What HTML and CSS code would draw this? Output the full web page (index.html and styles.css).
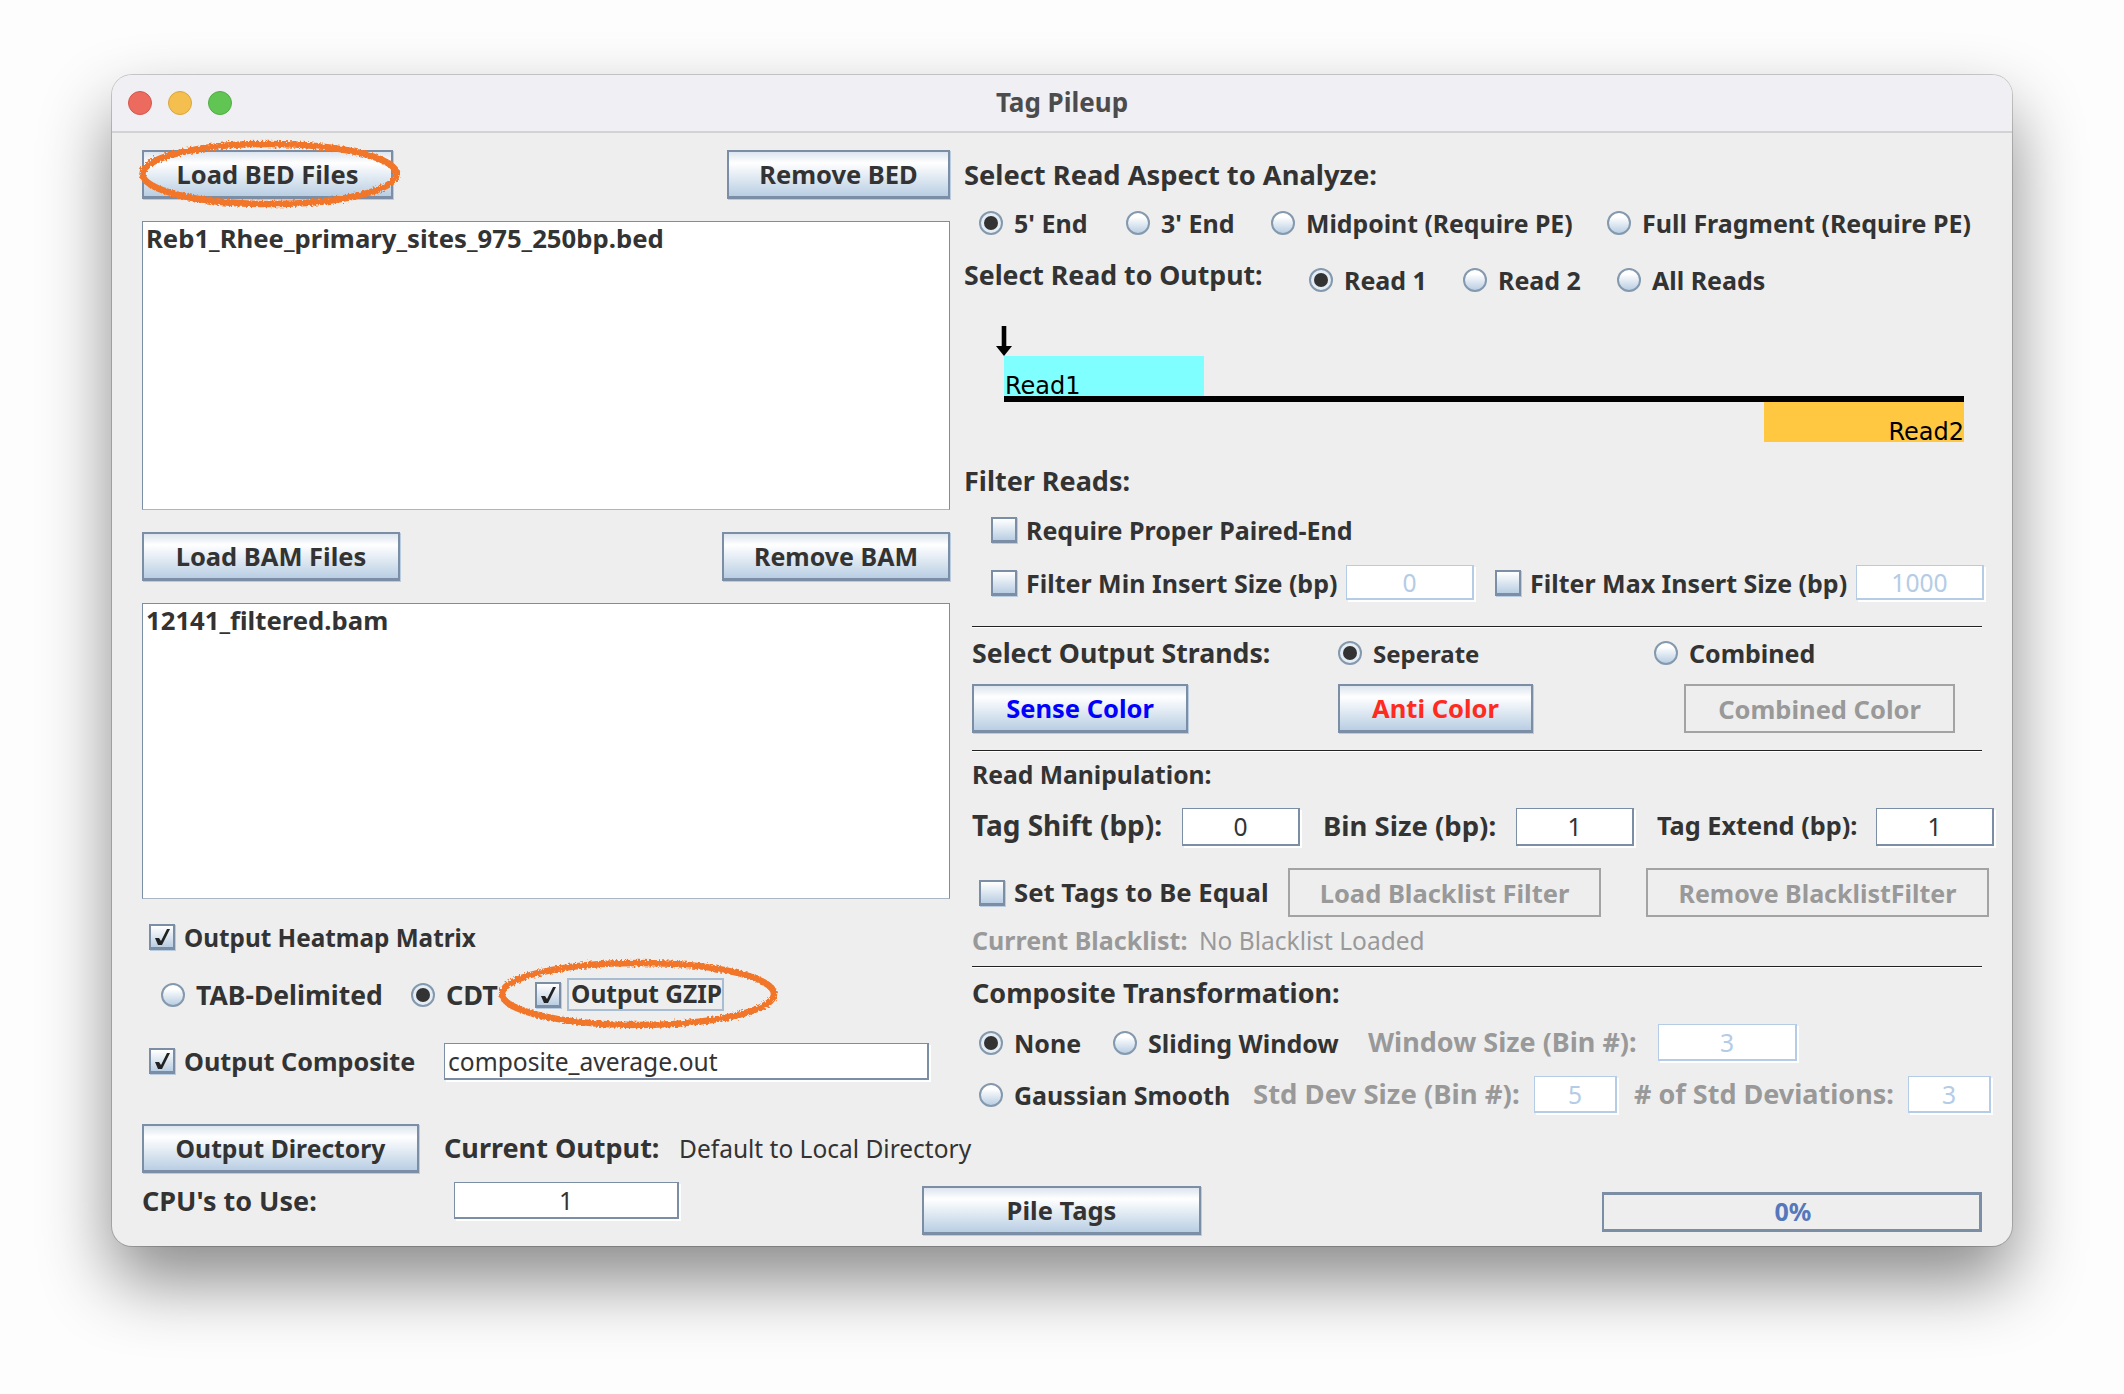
FILE: index.html
```html
<!DOCTYPE html>
<html lang="en">
  <head>
    <meta charset="UTF-8" />
    <title>Tag Pileup</title>
    <link rel="stylesheet" href="styles.css">
  </head>

  <body>
    <svg class="defs" width="0" height="0">
      <filter id="rough" x="-5%" y="-15%" width="110%" height="130%">
        <feTurbulence type="fractalNoise" baseFrequency="0.45" numOctaves="2" seed="4" />
        <feDisplacementMap in="SourceGraphic" scale="5" />
      </filter>
    </svg>

    <div class="window">
      <div class="titlebar">
        <span class="light red"></span>
        <span class="light yellow"></span>
        <span class="light green"></span>
        <span class="title">Tag Pileup</span>
      </div>

      <div class="main">
        <!-- left side: input files and output options -->
        <div class="left">
          <div class="row between">
            <button class="btn w-loadbed">Load BED Files</button>
            <button class="btn w-removebed">Remove BED</button>
          </div>
          <div class="list first">Reb1_Rhee_primary_sites_975_250bp.bed</div>
          <div class="row between bam-row">
            <button class="btn w-loadbam">Load BAM Files</button>
            <button class="btn w-removebam">Remove BAM</button>
          </div>
          <div class="list second">12141_filtered.bam</div>

          <div class="row heatmap-row">
            <label class="opt"><span class="check on"><svg viewBox="0 0 22 22"><path d="M4 12h4l2 3 6-12h3l-8 16H7z" /></svg></span>Output Heatmap Matrix</label>
          </div>
          <div class="row format-row">
            <label class="opt w-tab"><span class="radio"></span>TAB-Delimited</label>
            <label class="opt w-cdt"><span class="radio on"></span>CDT</label>
            <label class="opt"><span class="check on"><svg viewBox="0 0 22 22"><path d="M4 12h4l2 3 6-12h3l-8 16H7z" /></svg></span><span class="focus">Output GZIP</span></label>
          </div>
          <div class="row composite-row">
            <label class="opt w-outcomp"><span class="check on"><svg viewBox="0 0 22 22"><path d="M4 12h4l2 3 6-12h3l-8 16H7z" /></svg></span>Output Composite</label>
            <div class="field w-compfile left-text">composite_average.out</div>
          </div>
        </div>

        <!-- right side: read settings -->
        <div class="right">
          <div class="row aspect-title big">Select Read Aspect to Analyze:</div>
          <div class="row aspect-row">
            <label class="opt w-5end"><span class="radio on"></span>5' End</label>
            <label class="opt w-3end"><span class="radio"></span>3' End</label>
            <label class="opt w-mid"><span class="radio"></span>Midpoint (Require PE)</label>
            <label class="opt"><span class="radio"></span>Full Fragment (Require PE)</label>
          </div>
          <div class="row output-row">
            <span class="output-title">Select Read to Output:</span>
            <label class="opt w-read"><span class="radio on"></span>Read 1</label>
            <label class="opt w-read"><span class="radio"></span>Read 2</label>
            <label class="opt"><span class="radio"></span>All Reads</label>
          </div>

          <div class="diagram">
            <svg class="arrow" width="20" height="30" viewBox="0 0 20 30"><path d="M7.7 0h4.6v20H18l-8 10-8-10h5.700z" /></svg>
            <div class="read read1">Read1</div>
            <div class="strand"></div>
            <div class="read read2">Read2</div>
          </div>

          <div class="row filter-title big">Filter Reads:</div>
          <div class="row paired-row">
            <label class="opt"><span class="check"></span>Require Proper Paired-End</label>
          </div>
          <div class="row insert-row">
            <label class="opt w-minsize"><span class="check"></span>Filter Min Insert Size (bp)</label>
            <div class="field off w-minfield">0</div>
            <label class="opt w-maxsize"><span class="check"></span>Filter Max Insert Size (bp)</label>
            <div class="field off w-minfield">1000</div>
          </div>

          <div class="panel">
            <hr class="sep sep1" />
            <div class="row strands-row">
              <span class="w-strands big">Select Output Strands:</span>
              <label class="opt w-seperate"><span class="radio on"></span>Seperate</label>
              <label class="opt"><span class="radio"></span>Combined</label>
            </div>
            <div class="row color-row">
              <button class="btn w-sense blue">Sense Color</button>
              <button class="btn w-anti red-text">Anti Color</button>
              <button class="btn off w-combined">Combined Color</button>
            </div>
            <hr class="sep sep2" />
            <div class="row manip-title">Read Manipulation:</div>
            <div class="row tag-row">
              <span class="w-tagshift">Tag Shift (bp):</span>
              <div class="field w-shift">0</div>
              <span class="w-binsize">Bin Size (bp):</span>
              <div class="field w-bin">1</div>
              <span class="w-extend">Tag Extend (bp):</span>
              <div class="field w-ext">1</div>
            </div>
            <div class="row black-row">
              <label class="opt w-settags"><span class="check"></span>Set Tags to Be Equal</label>
              <button class="btn off w-loadblack">Load Blacklist Filter</button>
              <button class="btn off w-removeblack">Remove BlacklistFilter</button>
            </div>
            <div class="row current-row disabled">
              <span class="w-curblack">Current Blacklist:</span>
              <span class="plain">No Blacklist Loaded</span>
            </div>
            <hr class="sep sep3" />
            <div class="row comp-title big">Composite Transformation:</div>
            <div class="row none-row">
              <label class="opt w-none"><span class="radio on"></span>None</label>
              <label class="opt w-sliding"><span class="radio"></span>Sliding Window</label>
              <span class="w-winsize big disabled">Window Size (Bin #):</span>
              <div class="field off w-winfield">3</div>
            </div>
            <div class="row gauss-row">
              <label class="opt w-gauss"><span class="radio"></span>Gaussian Smooth</label>
              <span class="w-stddev big disabled">Std Dev Size (Bin #):</span>
              <div class="field off w-stdfield">5</div>
              <span class="w-numdev big disabled"># of Std Deviations:</span>
              <div class="field off w-numfield">3</div>
            </div>
          </div>
        </div>
      </div>

      <!-- bottom rows -->
      <div class="row dir-row">
        <button class="btn w-outdir">Output Directory</button>
        <span class="w-curout big">Current Output:</span>
        <span class="plain">Default to Local Directory</span>
      </div>
      <div class="row run-row">
        <span class="w-cpu big">CPU's to Use:</span>
        <div class="field w-cpufield">1</div>
        <button class="btn w-pile">Pile Tags</button>
        <div class="progress">0%</div>
      </div>

      <!-- hand drawn circles on top of the window -->
      <svg class="mark mark-bed" width="265" height="70" viewBox="0 0 265 70">
        <ellipse cx="132.500" cy="35" rx="127" ry="30" />
      </svg>
      <svg class="mark mark-gzip" width="284" height="72" viewBox="0 0 284 72">
        <ellipse cx="142" cy="36" rx="136" ry="31" />
      </svg>
    </div>
  </body>
</html>
```

FILE: styles.css
```css
* {
  box-sizing: border-box;
}

html,
body {
  margin: 0;
  height: 1394px;
  overflow: hidden;
}

body {
  background-color: #fdfdfd;
  font-family: "Noto Sans", sans-serif;
  font-size: 25px;
  font-weight: 700;
  color: #333;
  padding: 75px 0 0 112px;
}

.defs {
  position: absolute;
}

.window {
  position: relative;
  width: 1900px;
  height: 1171px;
  background-color: #eeeeee;
  border-radius: 20px;
  box-shadow: 0 0 0 1px rgba(0, 0, 0, 0.18), 0 35px 70px 0 rgba(0, 0, 0, 0.46);
  overflow: visible;
}

.titlebar {
  display: flex;
  align-items: center;
  height: 58px;
  padding-left: 16px;
  gap: 16px;
  background-color: #f0eff3;
  border-bottom: 2px solid #d2d2d4;
  border-radius: 20px 20px 0 0;
  position: relative;
}

.light {
  width: 24px;
  height: 24px;
  border-radius: 50%;
}

.red {
  background-color: #ec6a5e;
  border: 1px solid #d5574c;
}

.yellow {
  background-color: #f4bf4f;
  border: 1px solid #d9a63c;
}

.green {
  background-color: #61c554;
  border: 1px solid #50ad44;
}

.title {
  position: absolute;
  left: 0;
  right: 0;
  padding-bottom: 3px;
  text-align: center;
  font-size: 26px;
  color: #4c4c4c;
}

.main {
  display: flex;
  padding: 17px 0 0 30px;
}

.left {
  width: 808px;
}

.right {
  width: 1030px;
  margin-left: 14px;
}

.row {
  display: flex;
  align-items: center;
}

.between {
  justify-content: space-between;
}

.opt {
  display: flex;
  align-items: center;
  white-space: nowrap;
}

.plain {
  font-size: 24.500px;
  font-weight: 400;
}

.big {
  font-size: 27px;
  padding-bottom: 2px;
}

.disabled {
  color: #999;
}

/* swing style buttons */
.btn {
  height: 49px;
  padding: 0;
  font: inherit;
  font-size: 25.5px;
  color: #333;
  border: 2px solid #7b8ea6;
  border-bottom-width: 3px;
  background: linear-gradient(#dce5ef, #ffffff 25%, #b9cee3);
  box-shadow: 1px 1px 0 #b9cce0;
}

.btn.off {
  color: #999;
  background: transparent;
  border: 2px solid #a3a3a3;
  box-shadow: none;
}

.btn.blue {
  color: #0000ff;
}

.btn.red-text {
  color: #ff2a20;
}

.list {
  background-color: #fff;
  border: 1px solid #7b8ea6;
  border-bottom-color: #a8b6c6;
  padding: 2px 3px;
  font-size: 25.7px;
  line-height: 30px;
}

.first {
  height: 289px;
  margin-top: 22px;
}

.second {
  height: 296px;
  margin-top: 22px;
}

.bam-row {
  margin-top: 22px;
}

/* radios and checkboxes */
.radio {
  flex: none;
  position: relative;
  width: 24px;
  height: 24px;
  margin-right: 11px;
  border-radius: 50%;
  border: 2px solid #8499ae;
  background: linear-gradient(#ffffff, #ffffff 20%, #b9cee3);
}

.radio.on {
  background: #e4ecf4;
}

.radio.on::after {
  content: "";
  position: absolute;
  left: 3px;
  top: 3px;
  width: 14px;
  height: 14px;
  border-radius: 50%;
  background-color: #333;
}

.check {
  flex: none;
  width: 26px;
  height: 26px;
  margin-right: 9px;
  border: 2px solid #7b8ea6;
  border-bottom-width: 3px;
  background: linear-gradient(#ffffff, #eef3f8 25%, #b9cee3);
  box-shadow: 1px 1px 0 #b9cce0;
}

.check svg {
  display: block;
  width: 22px;
  height: 22px;
}

.check path {
  fill: #222;
}

.focus {
  margin-left: -3px;
  padding: 0 0 0 2px;
  height: 33px;
  font-size: 24.500px;
  line-height: 28px;
  border: 2px solid #a9bdd2;
}

/* text fields */
.field {
  flex: none;
  height: 37px;
  text-align: center;
  font-size: 24.600px;
  line-height: 35px;
  font-weight: 400;
  background-color: #fff;
  border: 1px solid #7b8ea6;
  border-right-width: 2px;
  border-bottom-width: 2px;
  box-shadow: 2px 2px 0 #fff;
}

.field.off {
  color: #b4cce6;
  border-color: #b4cce6;
}

.left-text {
  text-align: left;
  padding-left: 3px;
}

.heatmap-row {
  height: 30px;
  margin-top: 24px;
  padding-left: 7px;
  padding-bottom: 2px;
  font-size: 24.300px;
}

.format-row {
  height: 33px;
  margin-top: 25px;
  padding-left: 19px;
}

.composite-row {
  height: 37px;
  margin-top: 32px;
  padding-left: 7px;
}

.w-loadbed { width: 251px; }
.w-removebed { width: 223px; }
.w-loadbam { width: 258px; }
.w-removebam { width: 228px; font-size: 25px; }
.w-tab { width: 250px; font-size: 26.500px; }
.w-cdt { width: 124px; font-size: 27px; }
.w-outcomp { width: 295px; font-size: 25.200px; padding-bottom: 2px; }
.w-compfile { width: 485px; }

/* right side rows */
.aspect-title {
  height: 50px;
  font-size: 27.300px;
}

.aspect-row {
  height: 30px;
  margin-top: 8px;
  padding-left: 15px;
}

.w-5end { width: 147px; }
.w-3end { width: 145px; }
.w-mid { width: 336px; font-size: 24.800px; }

.output-row {
  height: 36px;
  margin-top: 24px;
}

.output-title {
  width: 345px;
  padding-bottom: 12px;
  font-size: 26.700px;
}

.w-read { width: 154px; }

.diagram {
  width: 960px;
  margin: 28px 0 0 40px;
}

.arrow {
  display: block;
  margin-left: -10px;
}

.arrow path {
  fill: #000;
}

.read {
  display: flex;
  align-items: flex-end;
  width: 200px;
  height: 40px;
  font-family: "DejaVu Sans", sans-serif;
  font-size: 24px;
  font-weight: 400;
  line-height: 20px;
  color: #000;
}

.read1 {
  padding-left: 1px;
  background-color: #7fffff;
}

.read2 {
  justify-content: flex-end;
  margin-left: auto;
  background-color: #ffc840;
}

.strand {
  height: 6px;
  background-color: #000;
}

.filter-title {
  height: 30px;
  margin-top: 24px;
}

.paired-row {
  height: 30px;
  margin-top: 20px;
  padding-left: 27px;
  padding-bottom: 2px;
}

.insert-row {
  height: 35px;
  margin-top: 19px;
  padding-left: 27px;
}

.w-minsize { width: 355px; }
.w-maxsize { width: 361px; margin-left: 21px; }
.w-minfield { width: 128px; height: 35px; line-height: 33px; }

.panel {
  padding-left: 8px;
}

.sep {
  width: 1010px;
  height: 2px;
  margin: 0;
  border: 0;
  border-top: 1px solid #222;
  border-bottom: 1px solid #fff;
}

.sep1 {
  margin-top: 26px;
}

.strands-row {
  height: 30px;
  margin-top: 10px;
}

.w-strands { width: 366px; font-size: 26.700px; }
.w-seperate { width: 316px; font-size: 24px; }

.color-row {
  margin-top: 16px;
}

.w-sense { width: 216px; }
.w-anti { width: 195px; margin-left: 150px; }
.w-combined { width: 271px; margin-left: 151px; }

.sep2 {
  margin-top: 17px;
}

.manip-title {
  height: 30px;
  margin-top: 8px;
  padding-bottom: 2px;
  font-size: 24.700px;
}

.tag-row {
  height: 38px;
  margin-top: 18px;
}

.tag-row span {
  padding-bottom: 4px;
}

.w-tagshift { width: 210px; font-size: 28px; }
.w-shift { width: 118px; height: 38px; }
.w-binsize { width: 193px; margin-left: 23px; font-size: 27.500px; }
.w-bin { width: 118px; height: 38px; }
.w-extend { width: 219px; margin-left: 23px; font-size: 25.300px; }
.w-ext { width: 118px; height: 38px; }

.black-row {
  height: 49px;
  margin-top: 22px;
  padding-left: 7px;
}

.w-settags { width: 309px; font-size: 25.700px; }
.w-loadblack { width: 313px; }
.w-removeblack { width: 343px; margin-left: 45px; font-size: 25px; }

.current-row {
  height: 30px;
  margin-top: 9px;
  padding-bottom: 2px;
}

.w-curblack { width: 227px; font-size: 25px; }

.sep3 {
  margin-top: 10px;
}

.comp-title {
  height: 30px;
  margin-top: 10px;
}

.none-row {
  height: 37px;
  margin-top: 16px;
  padding-left: 7px;
}

.w-none { width: 134px; }
.w-sliding { width: 255px; }
.w-winsize { width: 290px; }
.w-winfield { width: 139px; }

.gauss-row {
  height: 37px;
  margin-top: 15px;
  padding-left: 7px;
}

.w-gauss { width: 274px; }
.w-stddev { width: 281px; font-size: 27.500px; }
.w-stdfield { width: 83px; }
.w-numdev { width: 274px; margin-left: 17px; }
.w-numfield { width: 83px; }

/* bottom rows */
.dir-row {
  margin-top: 11px;
  padding-left: 30px;
}

.w-outdir { width: 277px; font-size: 24.700px; }
.w-curout { width: 235px; margin-left: 25px; }

.run-row {
  align-items: flex-start;
  height: 53px;
  margin-top: 9px;
  padding-left: 30px;
}

.w-cpu { width: 312px; line-height: 37px; }
.w-cpufield { width: 225px; }
.w-pile { width: 279px; margin: 4px 0 0 243px; }

.progress {
  width: 380px;
  height: 40px;
  margin: 10px 30px 0 auto;
  padding-left: 3px;
  text-align: center;
  line-height: 33px;
  color: #5577bb;
  border: 3px solid #7b8ea6;
  border-left-width: 2px;
}

/* orange marks drawn over the window */
.mark {
  position: absolute;
}

.mark ellipse {
  fill: none;
  stroke: #f2762a;
  stroke-width: 6.500;
  filter: url(#rough);
}

.mark-bed {
  left: 25px;
  top: 64px;
}

.mark-gzip {
  left: 384px;
  top: 883px;
}
```
